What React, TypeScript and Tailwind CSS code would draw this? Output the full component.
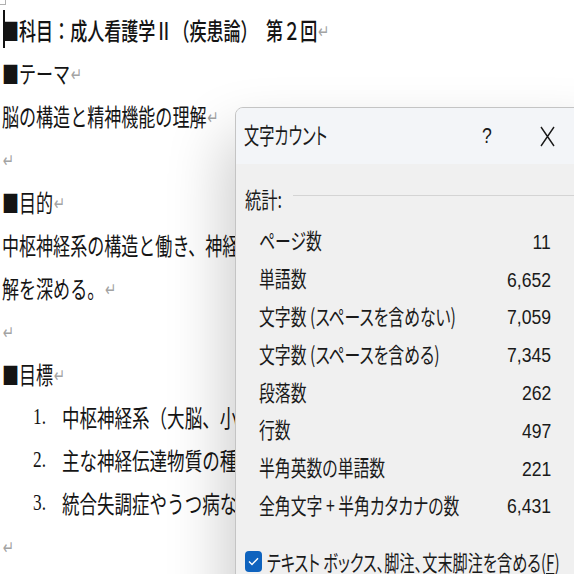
import React from 'react';

const Ret = () => (
  <span className="inline-block align-[2px] text-[#a3a3a3] text-[19px] leading-none font-['DejaVu_Sans',sans-serif] ml-[1px]">↵</span>
);

function Line({ children, bold = false }: { children: React.ReactNode; bold?: boolean }) {
  return (
    <div className="h-[43px] flex items-center whitespace-nowrap pl-[2px]">
      <span
        className={`inline-block origin-left scale-x-[0.71] text-[24px] leading-none text-[#141414] font-['Noto_Sans_CJK_JP',sans-serif] ${
          bold ? 'font-medium' : 'font-normal'
        }`}
      >
        {children}
      </span>
    </div>
  );
}

function ListLine({ n, children }: { n: string; children: React.ReactNode }) {
  return (
    <div className="h-[43px] flex items-center whitespace-nowrap pl-[33px]">
      <span className="w-[29px] shrink-0 inline-block">
        <span className="inline-block origin-left scale-x-[0.72] text-[24px] leading-none text-[#141414] font-['Liberation_Serif',serif]">
          {n}
        </span>
      </span>
      <span className="inline-block shrink-0 origin-left scale-x-[0.73] text-[24px] leading-none text-[#141414] font-['Noto_Sans_CJK_JP',sans-serif]">
        {children}
      </span>
    </div>
  );
}

const stats: [string, string][] = [
  ['ページ数', '11'],
  ['単語数', '6,652'],
  ['文字数 (スペースを含めない)', '7,059'],
  ['文字数 (スペースを含める)', '7,345'],
  ['段落数', '262'],
  ['行数', '497'],
  ['半角英数の単語数', '221'],
  ['全角文字 + 半角カタカナの数', '6,431'],
];

function WordCountDialog() {
  return (
    <div className="absolute left-[235px] top-[107px] w-[380px] h-[520px] rounded-tl-[8px] border border-[#c4c4c4] bg-[#f0f0f0] overflow-hidden shadow-[-10px_28px_60px_rgba(0,0,0,0.2)]">
      {/* title bar */}
      <div className="h-[56px] bg-[#f3f5f8] flex items-center pl-[8px] whitespace-nowrap">
        <span className="w-[237px] shrink-0 inline-block">
          <span className="inline-block origin-left scale-x-[0.66] text-[23px] leading-none text-[#1a1a1a] font-['Noto_Sans_CJK_JP',sans-serif] [font-feature-settings:'palt']">
            文字カウント
          </span>
        </span>
        <span className="w-[9px] shrink-0 inline-block text-center text-[22px] leading-none text-[#1a1a1a] font-['Liberation_Sans',sans-serif] scale-x-[0.8]">
          ?
        </span>
        <svg className="ml-[50px] shrink-0" width="15" height="21" viewBox="0 0 15 21">
          <path d="M1 1 L14 20 M14 1 L1 20" stroke="#1a1a1a" strokeWidth="1.4" fill="none" />
        </svg>
      </div>

      {/* statistics header */}
      <div className="mt-[20px] h-[28px] flex items-center pl-[9px] whitespace-nowrap">
        <span className="inline-block shrink-0 origin-left scale-x-[0.74] text-[22px] leading-none text-[#1a1a1a] font-['Noto_Sans_CJK_JP',sans-serif] w-[48px]">
          統計:
        </span>
        <div className="h-px flex-1 bg-[#d4d4d4] -mt-[5px]" />
      </div>

      {/* stats rows */}
      <div className="mt-[11px] ml-[23px] w-[292px]">
        {stats.map(([label, value]) => (
          <div key={label} className="h-[37.8px] flex items-center whitespace-nowrap">
            <div className="flex-1 min-w-0">
              <span className="inline-block origin-left scale-x-[0.72] text-[22px] leading-none text-[#1a1a1a] font-['Noto_Sans_CJK_JP',sans-serif] [font-feature-settings:'palt']">
                {label}
              </span>
            </div>
            <span className="inline-block shrink-0 origin-right scale-x-[0.88] text-[20px] leading-none text-[#1a1a1a] font-['Liberation_Sans',sans-serif]">
              {value}
            </span>
          </div>
        ))}
      </div>

      {/* checkbox */}
      <div className="mt-[22px] h-[28px] flex items-center pl-[9px] whitespace-nowrap">
        <span className="w-[17px] h-[21px] shrink-0 rounded-[4px] bg-[#0f63be] flex items-center justify-center">
          <svg width="11" height="9" viewBox="0 0 11 9">
            <path d="M1 4.6 L4 7.6 L10 1.2" stroke="#ffffff" strokeWidth="1.4" fill="none" />
          </svg>
        </span>
        <span className="ml-[5px] inline-block origin-left scale-x-[0.69] text-[22px] leading-none text-[#1a1a1a] font-['Noto_Sans_CJK_JP',sans-serif] [font-feature-settings:'palt']">
          テキスト ボックス、脚注、文末脚注を含める(<span className="underline underline-offset-2">F</span>)
        </span>
      </div>
    </div>
  );
}

export default function App() {
  return (
    <div className="relative w-[574px] h-[574px] bg-white overflow-hidden">
      <div className="pt-[8px]">
        <Line bold>
          ■科目：成人看護学Ⅱ（疾患論）　第２回<Ret />
        </Line>
        <Line>
          ■テーマ<Ret />
        </Line>
        <Line>
          脳の構造と精神機能の理解<Ret />
        </Line>
        <Line>
          <Ret />
        </Line>
        <Line>
          ■目的<Ret />
        </Line>
        <Line>中枢神経系の構造と働き、神経伝達物質の役割、精神疾患との関連について理</Line>
        <Line>
          解を深める。<Ret />
        </Line>
        <Line>
          <Ret />
        </Line>
        <Line>
          ■目標<Ret />
        </Line>
        <ListLine n="1.">中枢神経系（大脳、小脳、脳幹、脊髄）の構造と機能を説明できる。</ListLine>
        <ListLine n="2.">主な神経伝達物質の種類と働きを説明できる。</ListLine>
        <ListLine n="3.">統合失調症やうつ病などの精神疾患の病態を説明できる。</ListLine>
        <Line>
          <Ret />
        </Line>
      </div>

      {/* page corner mark and text cursor */}
      <div className="absolute left-0 top-0 w-[6px] h-[5px] border-r border-b border-[#b0b0b0]" />
      <div className="absolute left-[3px] top-[10px] w-[2px] h-[38px] bg-[#111]" />

      <WordCountDialog />
    </div>
  );
}
